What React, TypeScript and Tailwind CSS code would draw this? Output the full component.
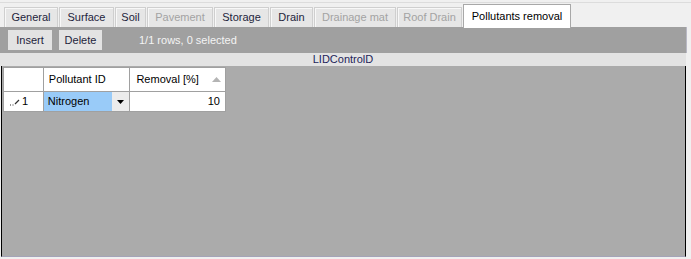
import React from "react";

const tabs = [
  { label: "General", w: 54, enabled: true },
  { label: "Surface", w: 55, enabled: true },
  { label: "Soil", w: 31, enabled: true },
  { label: "Pavement", w: 66, enabled: false },
  { label: "Storage", w: 55, enabled: true },
  { label: "Drain", w: 43, enabled: true },
  { label: "Drainage mat", w: 82, enabled: false },
  { label: "Roof Drain", w: 65, enabled: false },
];

const App = () => {
  return (
    <div
      className="w-[691px] h-[259px] bg-[#f0f0f0] overflow-hidden text-[11px] leading-none text-[#1e1e3c]"
      style={{ fontFamily: '"Liberation Sans", Tahoma, sans-serif' }}
    >
      {/* Tab strip */}
      <div className="h-[25px] border-t border-[#dcdcdc] mt-[2px] flex items-end gap-px pl-[4px]">
        {tabs.map((t) => (
          <div
            key={t.label}
            style={{ width: t.w }}
            className={`h-[20px] flex items-center justify-center border border-b-0 border-[#cfcfcf] bg-[#e6e6e6] shadow-[inset_1px_1px_0_#f8f8f8] ${
              t.enabled ? "text-[#1e1e3c]" : "text-[#a3a3a3]"
            }`}
          >
            {t.label}
          </div>
        ))}
        <div className="relative z-10 w-[108px] h-[24px] -mb-px flex items-center justify-center bg-white border border-b-0 border-[#a8a8a8] text-[#000]">
          Pollutants removal
        </div>
      </div>

      {/* Toolbar */}
      <div className="w-[687px] h-[26px] bg-[#a0a0a0] border-r border-[#b8b8c4] flex items-center pl-[8px] gap-[7px]">
        <button className="w-[44px] h-[20px] bg-[#e3e3e3] text-[#1e1e3c]">Insert</button>
        <button className="w-[43px] h-[20px] bg-[#e3e3e3] text-[#1e1e3c]">Delete</button>
        <span className="ml-[30px] text-[#f4f4f4]">1/1 rows, 0 selected</span>
      </div>

      {/* Group header */}
      <div className="w-[686px] h-[13px] bg-[#e3e3e3] flex items-center justify-center text-[#1e1e5a]">
        LIDControlD
      </div>

      {/* Grid */}
      <div className="ml-px w-[685px] h-[191px] bg-[#ababab] border-l border-r border-black border-b border-b-[#a4a4b8] pl-px pt-px">
        <div className="flex flex-col w-[223px] bg-[#a0a0a0] gap-px p-px">
          <div className="flex h-[23px] gap-px">
            <div className="w-[39px] bg-white" />
            <div className="w-[86px] bg-white flex items-center pl-[5px] text-[#000]">Pollutant ID</div>
            <div className="w-[95px] bg-white flex items-center pl-[6px] pr-[4px] text-[#000]">
              <span className="flex-1">Removal [%]</span>
              <svg width="9" height="5" viewBox="0 0 9 5">
                <path d="M0 5 L4.5 0 L9 5 Z" fill="#b4b4b4" />
              </svg>
            </div>
          </div>
          <div className="flex h-[19px] gap-px">
            <div className="w-[39px] bg-white flex items-center pl-[5px] gap-[2px] text-[#000]">
              <svg width="11" height="8" viewBox="0 0 11 8">
                <path d="M1 7 L2 7 M3.5 7 L4.5 7 M6 6 L10 2" stroke="#303030" strokeWidth="1.2" />
              </svg>
              <span>1</span>
            </div>
            <div className="w-[86px] bg-[#99cbf8] flex items-center pl-[4px] text-[#000]">
              <span className="flex-1">Nitrogen</span>
              <div className="w-[17px] h-[19px] bg-[#ececec] flex items-center justify-center">
                <svg width="7" height="4" viewBox="0 0 7 4">
                  <path d="M0 0 L7 0 L3.5 4 Z" fill="#000" />
                </svg>
              </div>
            </div>
            <div className="w-[95px] bg-white flex items-center justify-end pr-[5px] text-[#000]">10</div>
          </div>
        </div>
      </div>
    </div>
  );
};

export default App;
